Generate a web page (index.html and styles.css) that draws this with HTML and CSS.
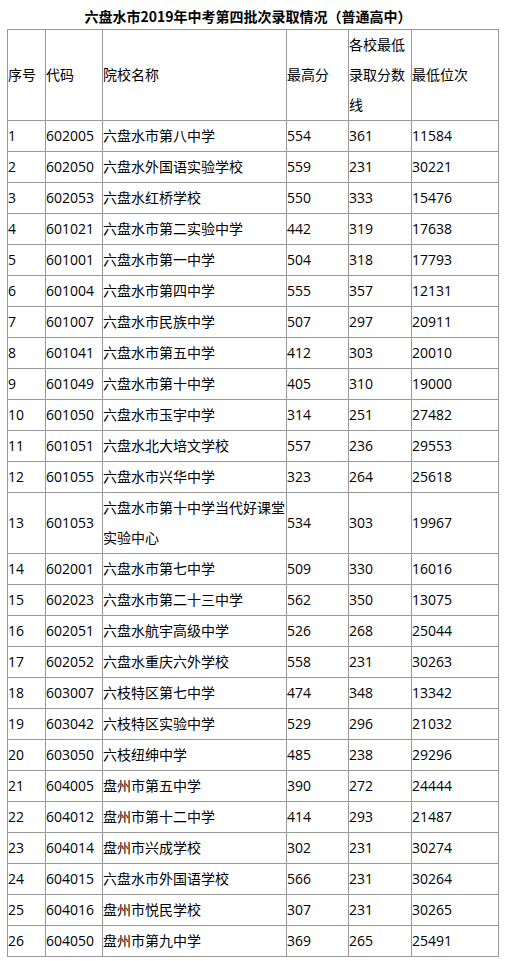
FILE: index.html
```html
<!DOCTYPE html>
<html lang="zh-CN">
<head>
<meta charset="utf-8">
<title>六盘水市2019年中考第四批次录取情况（普通高中）</title>
<link rel="stylesheet" href="styles.css">
</head>
<body>
<div class="page">
  <h1 class="title">六盘水市2019年中考第四批次录取情况（普通高中）</h1>
  <table class="score-table">
    <colgroup>
      <col class="c1"><col class="c2"><col class="c3"><col class="c4"><col class="c5"><col class="c6">
    </colgroup>
    <tr class="head"><td>序号</td><td>代码</td><td>院校名称</td><td>最高分</td><td>各校最低录取分数线</td><td>最低位次</td></tr>
    <tr><td>1</td><td>602005</td><td>六盘水市第八中学</td><td>554</td><td>361</td><td>11584</td></tr>
    <tr><td>2</td><td>602050</td><td>六盘水外国语实验学校</td><td>559</td><td>231</td><td>30221</td></tr>
    <tr><td>3</td><td>602053</td><td>六盘水红桥学校</td><td>550</td><td>333</td><td>15476</td></tr>
    <tr><td>4</td><td>601021</td><td>六盘水市第二实验中学</td><td>442</td><td>319</td><td>17638</td></tr>
    <tr><td>5</td><td>601001</td><td>六盘水市第一中学</td><td>504</td><td>318</td><td>17793</td></tr>
    <tr><td>6</td><td>601004</td><td>六盘水市第四中学</td><td>555</td><td>357</td><td>12131</td></tr>
    <tr><td>7</td><td>601007</td><td>六盘水市民族中学</td><td>507</td><td>297</td><td>20911</td></tr>
    <tr><td>8</td><td>601041</td><td>六盘水市第五中学</td><td>412</td><td>303</td><td>20010</td></tr>
    <tr><td>9</td><td>601049</td><td>六盘水市第十中学</td><td>405</td><td>310</td><td>19000</td></tr>
    <tr><td>10</td><td>601050</td><td>六盘水市玉宇中学</td><td>314</td><td>251</td><td>27482</td></tr>
    <tr><td>11</td><td>601051</td><td>六盘水北大培文学校</td><td>557</td><td>236</td><td>29553</td></tr>
    <tr><td>12</td><td>601055</td><td>六盘水市兴华中学</td><td>323</td><td>264</td><td>25618</td></tr>
    <tr><td>13</td><td>601053</td><td>六盘水市第十中学当代好课堂实验中心</td><td>534</td><td>303</td><td>19967</td></tr>
    <tr><td>14</td><td>602001</td><td>六盘水市第七中学</td><td>509</td><td>330</td><td>16016</td></tr>
    <tr><td>15</td><td>602023</td><td>六盘水市第二十三中学</td><td>562</td><td>350</td><td>13075</td></tr>
    <tr><td>16</td><td>602051</td><td>六盘水航宇高级中学</td><td>526</td><td>268</td><td>25044</td></tr>
    <tr><td>17</td><td>602052</td><td>六盘水重庆六外学校</td><td>558</td><td>231</td><td>30263</td></tr>
    <tr><td>18</td><td>603007</td><td>六枝特区第七中学</td><td>474</td><td>348</td><td>13342</td></tr>
    <tr><td>19</td><td>603042</td><td>六枝特区实验中学</td><td>529</td><td>296</td><td>21032</td></tr>
    <tr><td>20</td><td>603050</td><td>六枝纽绅中学</td><td>485</td><td>238</td><td>29296</td></tr>
    <tr><td>21</td><td>604005</td><td>盘州市第五中学</td><td>390</td><td>272</td><td>24444</td></tr>
    <tr><td>22</td><td>604012</td><td>盘州市第十二中学</td><td>414</td><td>293</td><td>21487</td></tr>
    <tr><td>23</td><td>604014</td><td>盘州市兴成学校</td><td>302</td><td>231</td><td>30274</td></tr>
    <tr><td>24</td><td>604015</td><td>六盘水市外国语学校</td><td>566</td><td>231</td><td>30264</td></tr>
    <tr><td>25</td><td>604016</td><td>盘州市悦民学校</td><td>307</td><td>231</td><td>30265</td></tr>
    <tr><td>26</td><td>604050</td><td>盘州市第九中学</td><td>369</td><td>265</td><td>25491</td></tr>
  </table>
</div>
</body>
</html>
```

FILE: styles.css
```css
html, body {
  margin: 0;
  padding: 0;
  background: #ffffff;
}

body {
  font-family: "Open Sans", "Noto Sans CJK SC", sans-serif;
  color: #000000;
}

.page {
  padding: 0 0 0 7px;
}

.title {
  width: 482px;
  margin: 0;
  padding: 5px 0 2px 0;
  font-size: 14px;
  line-height: 22px;
  font-weight: bold;
  text-align: center;
  font-family: "Noto Sans CJK SC", sans-serif;
}

.score-table {
  border-collapse: collapse;
  table-layout: fixed;
  width: 492px;
  font-size: 14px;
  line-height: 30px;
}

.score-table td {
  border: 1px solid #999999;
  padding: 0;
  vertical-align: middle;
  text-align: left;
  word-break: break-all;
}

.c1 { width: 38px; }
.c2 { width: 57px; }
.c3 { width: 184px; }
.c4 { width: 62px; }
.c5 { width: 63px; }
.c6 { width: 87px; }
```
